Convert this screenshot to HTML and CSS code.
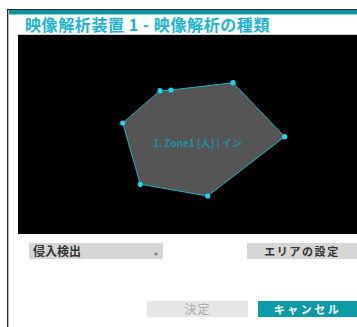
FILE: index.html
```html
<!DOCTYPE html>
<html lang="ja">
<head>
<meta charset="utf-8">
<link rel="stylesheet" href="styles.css">
</head>
<body>
<div class="dialog">
  <div class="bar"></div>
  <h1 class="title">映像解析装置 1 - 映像解析の種類</h1>
  <div class="video">
    <svg class="zone" width="339" height="199" viewBox="0 0 339 199">
      <polygon points="142,55.7 153,55 215,47.7 266.7,101.7 189.7,161 122.3,149.3 104.7,88" fill="#555555" stroke="#1fb3c6" stroke-width="1"/>
      <g fill="#19d6ee">
        <circle cx="142" cy="55.7" r="2.6"/>
        <circle cx="153" cy="55" r="2.6"/>
        <circle cx="215" cy="47.7" r="2.6"/>
        <circle cx="266.7" cy="101.7" r="2.6"/>
        <circle cx="189.7" cy="161" r="2.6"/>
        <circle cx="122.3" cy="149.3" r="2.6"/>
        <circle cx="104.7" cy="88" r="2.6"/>
      </g>
      <text x="179.5" y="111.5" text-anchor="middle" class="zone-label">1. Zone1 [人] | イン</text>
    </svg>
  </div>
  <div class="controls">
    <div class="select">侵入検出<span class="arrow"></span></div>
    <div class="area-btn">エリアの設定</div>
  </div>
  <div class="actions">
    <div class="btn btn-ok">決定</div>
    <div class="btn btn-cancel">キャンセル</div>
  </div>
</div>
</body>
</html>
```
FILE: styles.css
```css
html, body {
  margin: 0;
  padding: 0;
  background: #ffffff;
  overflow: hidden;
  width: 357px;
  height: 327px;
}
body {
  font-family: "Noto Sans CJK JP", "Noto Sans", sans-serif;
}
.dialog {
  margin: 9px 0 0 7px;
  width: 350px;
  height: 318px;
  border-top: 1px solid #2a2a2a;
  border-left: 1px solid #2a2a2a;
  box-shadow: inset 1px 0 0 #b9b9b9;
  box-sizing: border-box;
  padding-left: 1px;
}
.bar {
  height: 4px;
  background: #12929f;
  border-bottom: 1px solid #7fd2dc;
}
.title {
  margin: 0;
  height: 19px;
  padding-left: 16px;
  font-size: 16px;
  line-height: 19px;
  font-weight: 700;
  color: #1eb4cf;
  letter-spacing: 0.6px;
  white-space: nowrap;
}
.video {
  margin-left: 9px;
  height: 199px;
  background: #000;
  border-top: 1px solid #c8c8c8;
}
.zone {
  display: block;
}
.zone-label {
  font-family: "Noto Sans CJK JP", sans-serif;
  font-size: 10px;
  font-weight: 700;
  fill: #1a93a6;
}
.controls {
  display: flex;
  margin-top: 9px;
  height: 16px;
}
.select {
  margin-left: 20px;
  width: 134px;
  height: 16px;
  background: #d6d6d6;
  font-size: 12px;
  line-height: 16px;
  font-weight: 700;
  color: #333;
  padding-left: 4px;
  box-sizing: border-box;
  position: relative;
}
.arrow {
  position: absolute;
  right: 5px;
  top: 10px;
  width: 0;
  height: 0;
  border-left: 2px solid transparent;
  border-right: 2px solid transparent;
  border-top: 3px solid #777;
}
.area-btn {
  margin-left: 84px;
  flex: 1;
  height: 16px;
  background: #d6d6d6;
  font-size: 11px;
  line-height: 16px;
  font-weight: 700;
  color: #333;
  text-align: center;
  letter-spacing: 1.6px;
}
.actions {
  display: flex;
  margin-top: 42px;
  height: 16px;
}
.btn {
  height: 16px;
  font-size: 11px;
  line-height: 16px;
  font-weight: 700;
  text-align: center;
}
.btn-ok {
  margin-left: 138px;
  width: 101px;
  background: #e6e6e6;
  color: #a8a8a8;
  font-size: 12px;
  font-weight: 400;
  letter-spacing: 1px;
}
.btn-cancel {
  margin-left: 10px;
  flex: 1;
  background: #0e99a6;
  color: #ffffff;
  letter-spacing: 2.5px;
}
```
